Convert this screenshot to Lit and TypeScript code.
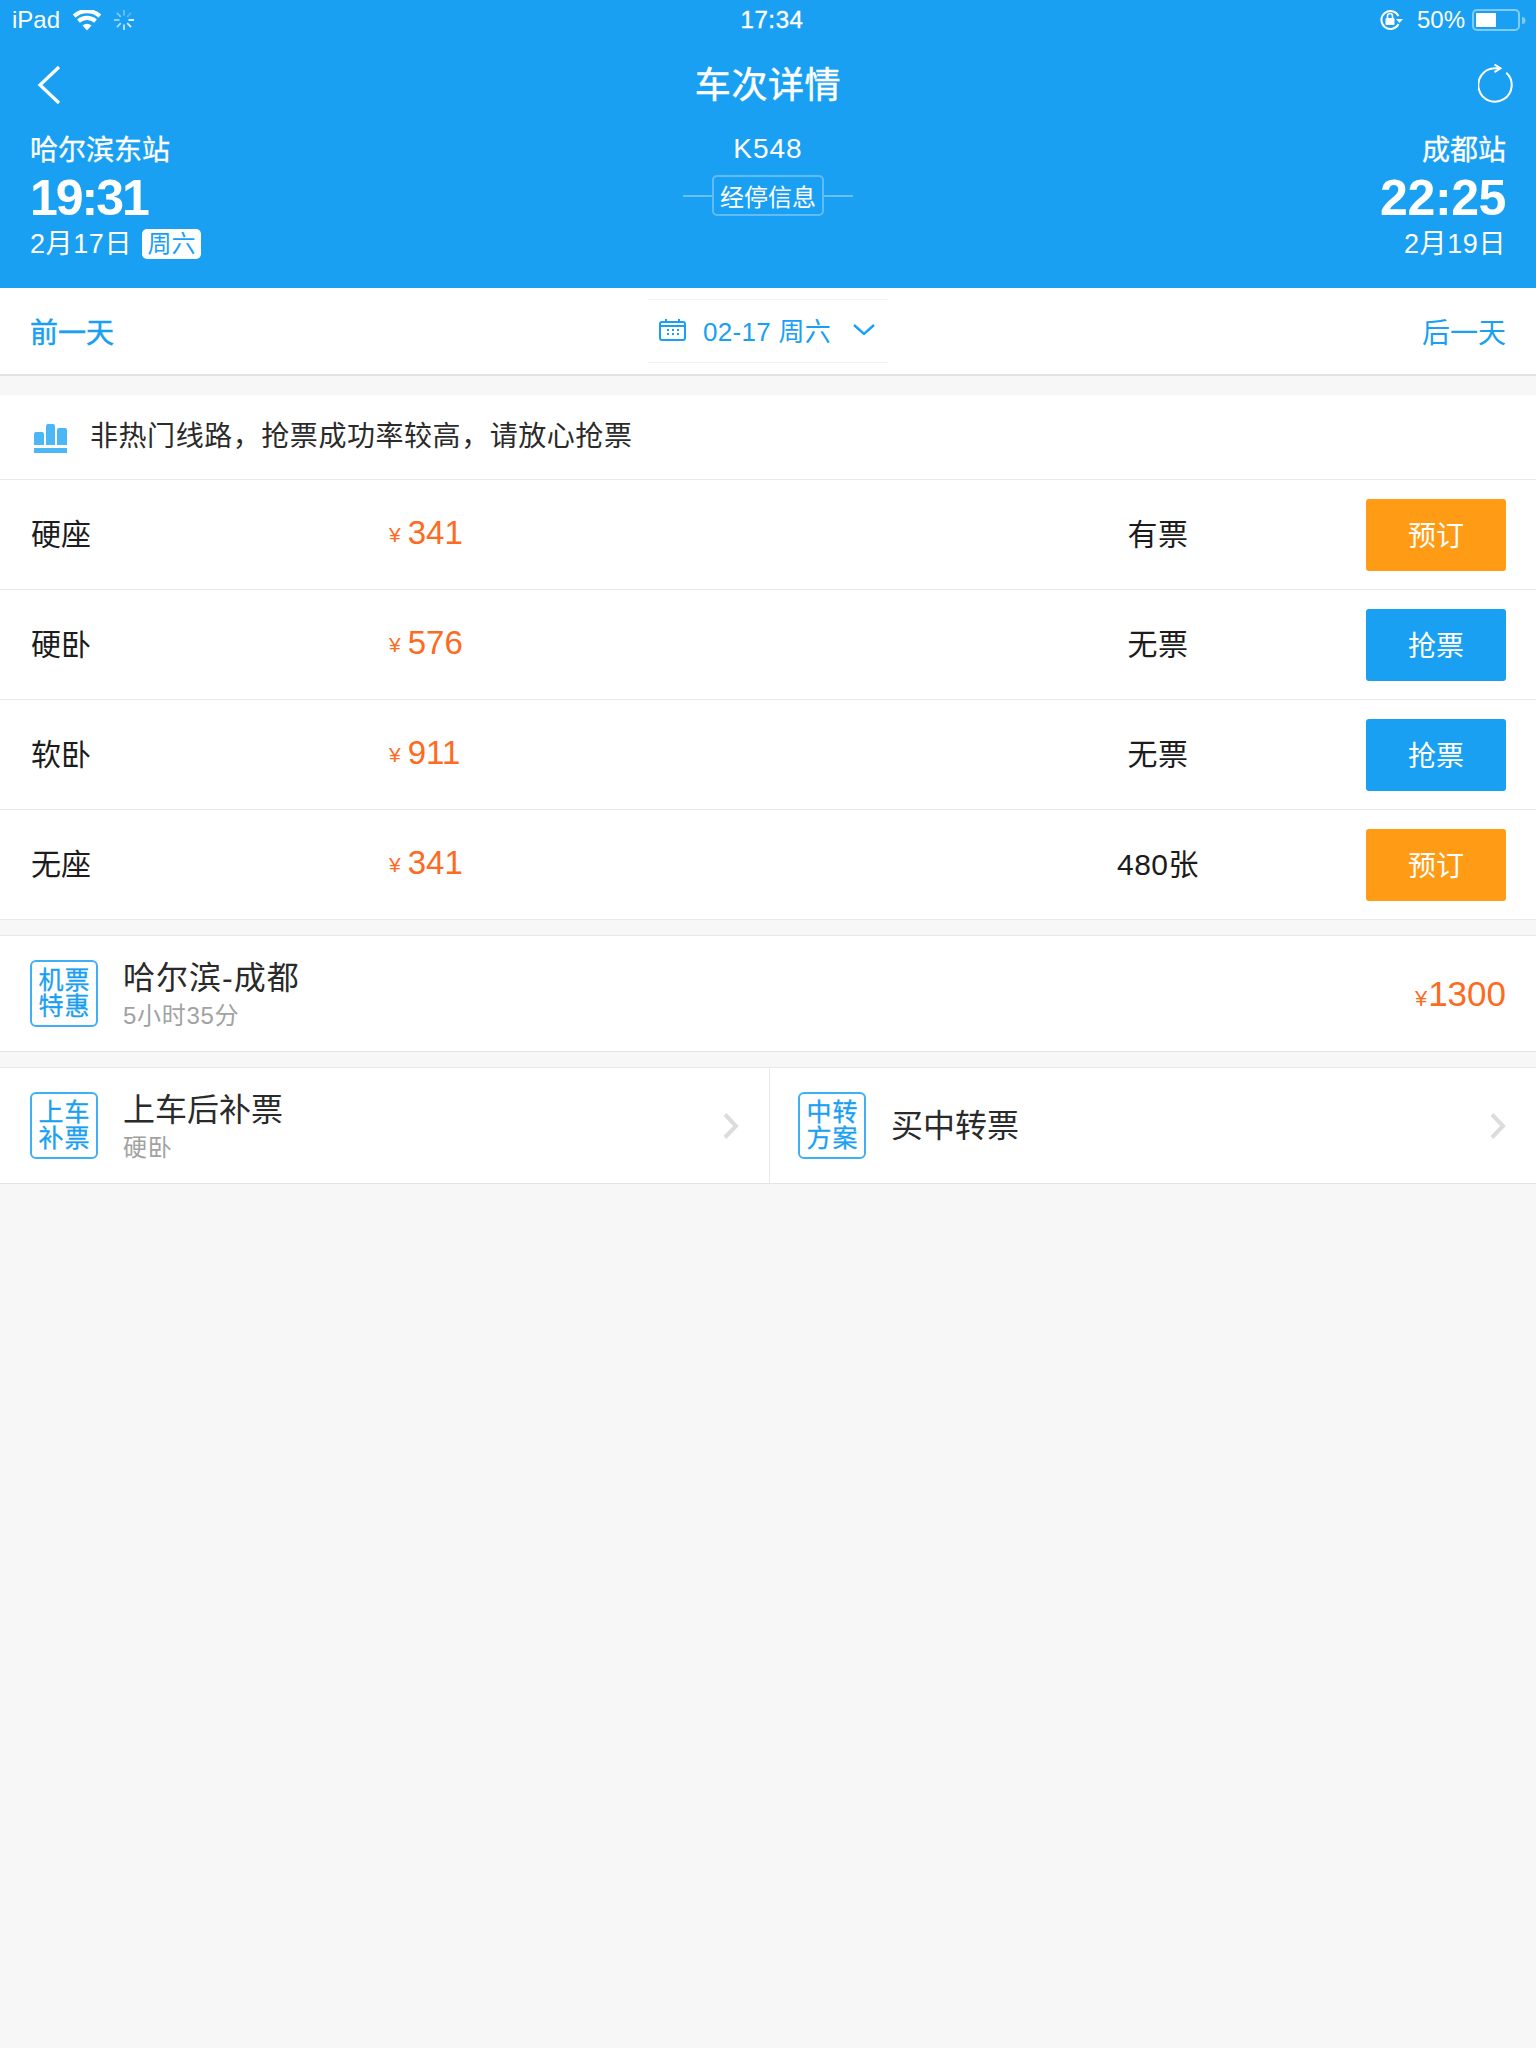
import { LitElement, html, css, svg } from "lit";
import { customElement } from "lit/decorators.js";

const rows = [
  { name: "硬座", price: "341", status: "有票", action: "预订", kind: "book" },
  { name: "硬卧", price: "576", status: "无票", action: "抢票", kind: "grab" },
  { name: "软卧", price: "911", status: "无票", action: "抢票", kind: "grab" },
  { name: "无座", price: "341", status: "480张", action: "预订", kind: "book" },
];

const chevron = html`<svg class="arrow" width="16" height="26" viewBox="0 0 16 26"><path d="M2 1.500l11 11.500L2 24.500" fill="none" stroke="#dcdcdc" stroke-width="4"/></svg>`;

const badge = (t: string) => html`<div class="tag">${[...t].map((c) => html`<span>${c}</span>`)}</div>`;

@customElement("app-root")
export class AppRoot extends LitElement {
  static styles = css`
    :host {
      display: block;
      min-height: 2048px;
      background: #f7f7f7;
      font-family: "Liberation Sans", "Noto Sans CJK SC", sans-serif;
      color: #222;
    }
    * { box-sizing: border-box; }
    .head { background: #1aa0f3; color: #fff; height: 288px; display: flex; flex-direction: column; }
    .status { height: 40px; display: grid; grid-template-columns: 1fr auto 1fr; align-items: center; padding: 0 10px 0 12px; font-size: 24px; }
    .status-l, .status-r { display: flex; align-items: center; }
    .status-l { gap: 13px; }
    .status-r { justify-content: flex-end; }
    .clock { font-size: 24px; letter-spacing: .6px; padding-left: 6px; -webkit-text-stroke: .4px #fff; }
    .pct { margin: 0 7px 0 14px; font-size: 24px; }
    .nav { height: 89px; display: grid; grid-template-columns: 1fr auto 1fr; align-items: center; padding: 0 18px; }
    .nav .back { margin-left: 19px; }
    .nav svg:last-child { justify-self: end; }
    .title { font-size: 36px; line-height: 50px; letter-spacing: .6px; padding-top: 3px; -webkit-text-stroke: .5px #fff; }
    .info { display: grid; grid-template-columns: 1fr auto 1fr; padding: 0 30px; }
    .end { display: flex; flex-direction: column; }
    .end.right { align-items: flex-end; }
    .station { font-size: 28px; line-height: 44px; margin-bottom: -2px; -webkit-text-stroke: .3px #fff; }
    .time { font-size: 50px; font-weight: 700; line-height: 54px; letter-spacing: -.4px; }
    .time.tight { letter-spacing: -2px; }
    .date { font-size: 27px; line-height: 36px; letter-spacing: .6px; display: flex; align-items: center; gap: 10px; margin-top: 1px; }
    .wk { background: #fff; color: #1aa0f3; border-radius: 5px; font-size: 24px; letter-spacing: 0; height: 30px; width: 59px; display: flex; align-items: center; justify-content: center; }
    .mid { display: flex; flex-direction: column; align-items: center; margin-top: -1px; }
    .train { font-size: 28px; line-height: 42px; letter-spacing: 1px; }
    .stops { display: flex; align-items: center; margin-top: 5px; }
    .stops i { width: 29px; height: 2px; background: rgba(255,255,255,.35); }
    .stops span { width: 112px; height: 41px; border: 2px solid rgba(255,255,255,.3); border-radius: 5px; font-size: 24px; display: flex; align-items: center; justify-content: center; }

    .datebar { height: 88px; background: #fff; border-bottom: 2px solid #e2e2e2; display: flex; align-items: center; justify-content: space-between; padding: 0 30px; color: #1aa0f3; font-size: 28px; }
    .datebar .prev { -webkit-text-stroke: .5px #1aa0f3; }
    .picker { width: 240px; height: 64px; border-top: 1px solid #f2f2f2; border-bottom: 1px solid #f2f2f2; display: flex; align-items: center; gap: 17px; padding: 0 0 2px 11px; font-size: 26px; letter-spacing: .3px; margin-bottom: 1px; }
    .picker svg:last-child { margin-left: 5px; }

    .notice { margin-top: 19px; height: 85px; background: #fff; border-bottom: 1px solid #e8e8e8; display: flex; align-items: center; gap: 23px; padding-left: 34px; font-size: 28px; letter-spacing: .55px; color: #2b2b2b; }
    .notice span { padding-bottom: 7px; }
    .notice svg { margin-top: 2px; }
    .row { height: 110px; background: #fff; border-bottom: 1px solid #e8e8e8; display: grid; grid-template-columns: 358px 1fr 180px 258px; padding: 1px 30px 0 31px; align-items: center; font-size: 30px; color: #1c1c1c; }
    .row .name, .row .st { padding-bottom: 7px; }
    .st { text-align: center; grid-column: 3; letter-spacing: .5px; }
    .price { color: #fd6a21; font-size: 33px; display: flex; align-items: baseline; gap: 7px; margin-top: -4px; }
    .price small { font-size: 21px; margin-bottom: -2px; transform: translateY(-2px); }
    .btn { justify-self: end; width: 140px; height: 72px; padding-bottom: 3px; border-radius: 3px; color: #fff; display: flex; align-items: center; justify-content: center; font-size: 28px; }
    .btn.book { background: #ff9b14; }
    .btn.grab { background: #1aa0f3; }

    .card { background: #fff; border-top: 1px solid #e8e8e8; border-bottom: 1px solid #e4e4e4; height: 117px; display: flex; align-items: center; margin-top: 15px; }
    .flight { padding: 0 30px; }
    .cell { flex: 1; height: 100%; display: flex; align-items: center; padding: 0 30px 0 28px; }
    .cell:first-child { border-right: 1px solid #e8e8e8; flex: 0 0 770px; padding-left: 30px; }
    .tag { width: 68px; height: 67px; flex: none; border: 2px solid #3fb0f6; border-radius: 6px; padding-bottom: 2px; display: grid; grid-template-columns: 26px 26px; grid-auto-rows: 26px; justify-content: center; align-content: center; color: #1aa0f3; font-size: 25px; line-height: 26px; text-align: center; -webkit-text-stroke: .3px #1aa0f3; }
    .txt { margin-left: 25px; flex: 1; display: flex; flex-direction: column; }
    .txt b { font-weight: 400; font-size: 32px; line-height: 44px; color: #2a2a2a; }
    .flight .txt b { letter-spacing: 1px; }
    .txt span { font-size: 24px; line-height: 32px; letter-spacing: .7px; color: #a2a2a2; }
    .fare { color: #fd6a21; font-size: 35px; display: flex; align-items: baseline; }
    .fare small { font-size: 22px; margin-right: 1px; }
    .arrow { flex: none; }
  `;

  render() {
    const spokes = Array.from({ length: 8 }, (_, i) =>
      svg`<line x1="10" y1="0" x2="10" y2="5.500" stroke="#fff" stroke-width="1.800" opacity="${0.95 - i * 0.1}" transform="rotate(${90 + i * 45} 10 10)"/>`
    );
    return html`
      <div class="head">
        <div class="status">
          <div class="status-l">
            <span>iPad</span>
            <svg width="28" height="21" viewBox="0 0 28 21"><path d="M14 20.500l-4.500-5a6.500 6.500 0 0 1 9 0zM6.900 12.700l-2.800-3.100a15 15 0 0 1 19.800 0l-2.800 3.100a11 11 0 0 0-14.200 0zM2.500 7.700L-.2 4.500a21 21 0 0 1 28.400 0l-2.700 3.200a17 17 0 0 0-23 0z" fill="#fff"/></svg>
            <svg width="20" height="20" viewBox="0 0 20 20">${spokes}</svg>
          </div>
          <div class="clock">17:34</div>
          <div class="status-r">
            <svg width="24" height="22" viewBox="0 0 24 22"><path d="M19.500 7A9 9 0 1 0 19.500 15" fill="none" stroke="#fff" stroke-width="2"/><path d="M17 10h7l-3.500 4z" fill="#fff"/><rect x="6.500" y="9" width="9" height="7" rx="1" fill="#fff"/><path d="M8.500 9V7a2.500 2.500 0 0 1 5 0v2" fill="none" stroke="#fff" stroke-width="1.600"/></svg>
            <span class="pct">50%</span>
            <svg width="54" height="22" viewBox="0 0 54 22"><rect x="1" y="1" width="46" height="20" rx="4" fill="none" stroke="#fff" stroke-opacity=".45" stroke-width="2"/><rect x="4" y="4" width="20" height="14" fill="#fff"/><path d="M50 8a3.500 3.500 0 0 1 0 7z" fill="#fff" fill-opacity=".45"/></svg>
          </div>
        </div>
        <div class="nav">
          <svg class="back" width="24" height="40" viewBox="0 0 24 40"><path d="M22 2L3 20l19 18" fill="none" stroke="#fff" stroke-width="3.200"/></svg>
          <div class="title">车次详情</div>
          <svg width="40" height="44" viewBox="0 0 40 44"><path d="M28.300 9.700A16.700 16.700 0 1 1 17 5.300h5" fill="none" stroke="#fff" stroke-width="2"/><path d="M16.500 1.500l6 3.800-6 3.800" fill="none" stroke="#fff" stroke-width="2"/></svg>
        </div>
        <div class="info">
          <div class="end">
            <div class="station">哈尔滨东站</div>
            <div class="time tight">19:31</div>
            <div class="date">2月17日<span class="wk">周六</span></div>
          </div>
          <div class="mid">
            <div class="train">K548</div>
            <div class="stops"><i></i><span>经停信息</span><i></i></div>
          </div>
          <div class="end right">
            <div class="station">成都站</div>
            <div class="time">22:25</div>
            <div class="date">2月19日</div>
          </div>
        </div>
      </div>

      <div class="datebar">
        <span class="prev">前一天</span>
        <div class="picker">
          <svg width="27" height="22" viewBox="0 0 27 22"><rect x="1" y="3" width="25" height="18" rx="2" fill="none" stroke="#1aa0f3" stroke-width="2"/><path d="M1 7h25M7 0v4M20 0v4" stroke="#1aa0f3" stroke-width="2"/><path d="M8 11h2M13 11h2M18 11h2M8 15h2M13 15h2M18 15h2" stroke="#1aa0f3" stroke-width="2"/></svg>
          <span>02-17 周六</span>
          <svg width="22" height="12" viewBox="0 0 22 12"><path d="M1 1l10 9 10-9" fill="none" stroke="#1aa0f3" stroke-width="2.400"/></svg>
        </div>
        <span>后一天</span>
      </div>

      <div class="notice">
        <svg width="33" height="29" viewBox="0 0 33 29"><path d="M0 10a2 2 0 0 1 2-2h6a2 2 0 0 1 2 2v11H0zM12 2a2 2 0 0 1 2-2h5a2 2 0 0 1 2 2v19H12zM23 6a2 2 0 0 1 2-2h6a2 2 0 0 1 2 2v15H23zM0 24h33v5H0z" fill="#4db6f5"/></svg>
        <span>非热门线路，抢票成功率较高，请放心抢票</span>
      </div>

      ${rows.map(
        (r) => html`<div class="row">
          <span class="name">${r.name}</span>
          <span class="price"><small>¥</small>${r.price}</span>
          <span class="st">${r.status}</span>
          <span class="btn ${r.kind}">${r.action}</span>
        </div>`
      )}

      <div class="card flight">
        ${badge("机票特惠")}
        <div class="txt"><b>哈尔滨-成都</b><span>5小时35分</span></div>
        <div class="fare"><small>¥</small>1300</div>
      </div>

      <div class="card">
        <div class="cell">
          ${badge("上车补票")}
          <div class="txt"><b>上车后补票</b><span>硬卧</span></div>
          ${chevron}
        </div>
        <div class="cell">
          ${badge("中转方案")}
          <div class="txt"><b>买中转票</b></div>
          ${chevron}
        </div>
      </div>
    `;
  }
}
